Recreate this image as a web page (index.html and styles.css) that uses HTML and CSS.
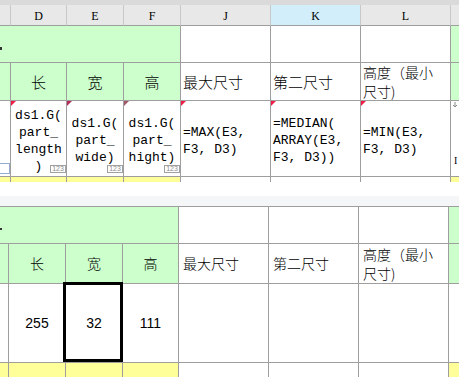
FILE: index.html
```html
<!DOCTYPE html>
<html lang="zh-CN">
<head>
<meta charset="utf-8">
<title>Sheet</title>
<link rel="stylesheet" href="styles.css">
</head>
<body>
<div class="pane">
  <div class="strip"></div>
  <div class="grid grid-top">
    <div class="c hd"></div>
    <div class="c hd">D</div>
    <div class="c hd">E</div>
    <div class="c hd">F</div>
    <div class="c hd">J</div>
    <div class="c hd hd-sel">K</div>
    <div class="c hd">L</div>
    <div class="c hd last"></div>

    <div class="c green merged"><span class="mark"></span></div>
    <div class="c"></div>
    <div class="c"></div>
    <div class="c"></div>
    <div class="c green last"></div>

    <div class="c green"></div>
    <div class="c green label center">长</div>
    <div class="c green label center">宽</div>
    <div class="c green label center">高</div>
    <div class="c label">最大尺寸</div>
    <div class="c label">第二尺寸</div>
    <div class="c label two">高度（最小<br>尺寸)</div>
    <div class="c green last"></div>

    <div class="c"><span class="blue-box"></span></div>
    <div class="c formula center note note-red"><div>ds1.G(<br>part_<br>length<br>)</div><span class="nb">123</span></div>
    <div class="c formula center note note-dark"><div>ds1.G(<br>part_<br>wide)</div><span class="nb">123</span></div>
    <div class="c formula center note note-gray"><div>ds1.G(<br>part_<br>hight)</div><span class="nb">123</span></div>
    <div class="c formula left note note-red"><div>=MAX(E3,<br>F3, D3)</div></div>
    <div class="c formula left note note-red"><div>=MEDIAN(<br>ARRAY(E3,<br>F3, D3))</div></div>
    <div class="c formula left note note-red"><div>=MIN(E3,<br>F3, D3)</div></div>
    <div class="c last extra">
      <svg class="arrow" width="6" height="6" viewBox="0 0 6 6"><path d="M3 0V5M1 3L3 5L5 3" fill="none" stroke="#8a8a8a" stroke-width="1"/></svg>
      <span class="cut">I</span>
    </div>

    <div class="c yellow end"></div>
    <div class="c yellow end"></div>
    <div class="c yellow end"></div>
    <div class="c yellow end"></div>
    <div class="c end"></div>
    <div class="c end"></div>
    <div class="c end"></div>
    <div class="c yellow end last"></div>
  </div>
</div>

<div class="sep"></div>

<div class="grid grid-bottom">
  <div class="c green merged"><span class="mark mark-sm"></span></div>
  <div class="c"></div>
  <div class="c"></div>
  <div class="c"></div>
  <div class="c green last"></div>

  <div class="c green"></div>
  <div class="c green label2 center">长</div>
  <div class="c green label2 center">宽</div>
  <div class="c green label2 center">高</div>
  <div class="c label2">最大尺寸</div>
  <div class="c label2">第二尺寸</div>
  <div class="c label2">高度（最小<br>尺寸)</div>
  <div class="c green last"></div>

  <div class="c"></div>
  <div class="c num">255</div>
  <div class="c num">32<span class="sel"></span></div>
  <div class="c num">111</div>
  <div class="c"></div>
  <div class="c"></div>
  <div class="c"></div>
  <div class="c last"></div>

  <div class="c yellow end"></div>
  <div class="c yellow end"></div>
  <div class="c yellow end"></div>
  <div class="c yellow end"></div>
  <div class="c end"></div>
  <div class="c end"></div>
  <div class="c end"></div>
  <div class="c yellow end last"></div>
</div>
</body>
</html>
```

FILE: styles.css
```css
html, body {
  margin: 0;
  padding: 0;
  background: #ffffff;
}

body {
  width: 465px;
  height: 377px;
  overflow: hidden;
  color: #000000;
  font-family: "Noto Sans CJK SC", "Liberation Sans", sans-serif;
}

.strip {
  width: 459px;
  height: 5px;
  background: #dadada;
}

.grid {
  display: grid;
  width: 459px;
}

.grid-top {
  grid-template-columns: 11px 56px 57px 57px 90px 90px 90px 8px;
  grid-template-rows: 21px 37px 38px 76px 5px;
}

.grid-bottom {
  border-top: 1px solid #9e9e9e;
  grid-template-columns: 9px 57px 57px 56px 90px 90px 90px 10px;
  grid-template-rows: 37px 40px 79px 15px;
}

.c {
  box-sizing: border-box;
  position: relative;
  min-width: 0;
  border-right: 1px solid #9e9e9e;
  border-bottom: 1px solid #9e9e9e;
}

.last {
  border-right: none;
}

.end {
  border-bottom: none;
}

.hd {
  background: #e8e8e8;
  border-right-color: #c8c8c8;
  border-bottom-color: #9e9e9e;
  display: flex;
  align-items: center;
  justify-content: center;
  padding-top: 2px;
  font-family: "Liberation Serif", serif;
  font-size: 12px;
}

.hd-sel {
  background: #d2eefa;
}

.green {
  background: #ccffcc;
}

.yellow {
  background: #ffff99;
}

.merged {
  grid-column: span 4;
}

.mark {
  position: absolute;
  left: 0;
  top: 21px;
  width: 2px;
  height: 3px;
  background: #333333;
}

.mark-sm {
  height: 2px;
}

.label {
  display: flex;
  align-items: center;
  padding-left: 2px;
  font-size: 15px;
  font-weight: 300;
  line-height: 17px;
}

.label.two {
  font-size: 14px;
  line-height: 19px;
}

.label2 {
  display: flex;
  align-items: center;
  padding-left: 4px;
  font-size: 14px;
  font-weight: 300;
  line-height: 19px;
}

.label.center,
.label2.center {
  justify-content: center;
  padding-left: 0;
}

.formula {
  display: flex;
  flex-direction: column;
  justify-content: center;
  padding-top: 4px;
  font-family: "Liberation Mono", monospace;
  font-size: 13px;
  line-height: 17px;
  white-space: nowrap;
}

.formula.center {
  align-items: center;
  text-align: center;
}

.formula.left {
  padding-left: 2px;
}

.note::before {
  content: "";
  position: absolute;
  left: 0;
  top: 0;
  border-top: 5px solid #f01e46;
  border-right: 5px solid transparent;
}

.note-dark::before {
  border-top-color: #b0305a;
}

.note-gray::before {
  border-top-color: #a05a6a;
}

.nb {
  position: absolute;
  right: 0;
  bottom: 3px;
  box-sizing: border-box;
  width: 16px;
  height: 8px;
  border: 1px solid #a0a0a0;
  background: #ffffff;
  font-family: "Liberation Sans", sans-serif;
  font-size: 7px;
  line-height: 6px;
  text-align: center;
  color: #8c8c8c;
}

.blue-box {
  position: absolute;
  left: -2px;
  top: 62px;
  box-sizing: border-box;
  width: 12px;
  height: 11px;
  border: 1px solid #94acd0;
  background: #ffffff;
}

.arrow {
  position: absolute;
  left: 1px;
  top: 1px;
}

.cut {
  position: absolute;
  left: 3px;
  top: 55px;
  font-family: "Liberation Serif", serif;
  font-size: 10px;
  line-height: 10px;
}

.num {
  display: flex;
  align-items: center;
  justify-content: center;
  font-family: "Liberation Sans", sans-serif;
  font-size: 14px;
}

.sep {
  width: 459px;
  height: 10px;
  margin-top: 14px;
  background: #f5f6f8;
}

.sel {
  position: absolute;
  left: -3px;
  top: -2px;
  box-sizing: border-box;
  width: 60px;
  height: 80px;
  border: 3px solid #000000;
}
```
